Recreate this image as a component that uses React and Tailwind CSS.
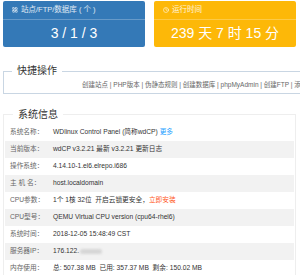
import { Clock, LayoutGrid } from 'lucide-react'

const ROWS = [
  { k: '系统名称：', v: <>WDlinux Control Panel (简称wdCP) <span className="text-[#1e9fff]">更多</span></> },
  { k: '当前版本：', v: 'wdCP v3.2.21 最新 v3.2.21 更新日志' },
  { k: '操作系统：', v: '4.14.10-1.el6.elrepo.i686' },
  { k: '主 机 名：', v: 'host.localdomain' },
  { k: 'CPU参数：', v: <>1个 1核 32位&nbsp;&nbsp;开启云锁更安全，<span className="text-[#ff5722]">立即安装</span></> },
  { k: 'CPU型号：', v: 'QEMU Virtual CPU version (cpu64-rhel6)' },
  { k: '系统时间：', v: '2018-12-05 15:48:49 CST' },
  { k: '服务器IP：', v: <span className="flex items-center">176.122.<span className="ml-[1px] inline-block h-[5px] w-[22px] rounded-full bg-[#d6d6d6] blur-[1px]" /></span> },
  { k: '内存使用：', v: '总: 507.38 MB  已用: 357.37 MB  剩余: 150.02 MB' },
]

const LINKS = ['创建站点', 'PHP版本', '伪静态规则', '创建数据库', 'phpMyAdmin', '创建FTP', '添加域名']

function Card({ color, icon, title, value }) {
  return (
    <div className={`h-[46px] w-[142px] rounded-[2px] text-white ${color}`}>
      <div className="flex h-[19px] items-center gap-[3px] border-b border-white/25 pl-[9px] text-[7.5px] text-white/85">
        {icon}{title}
      </div>
      <div className="flex h-[27px] items-center justify-center text-[14px] whitespace-pre">{value}</div>
    </div>
  )
}

export default function App() {
  return (
    <div className="h-[275px] w-[300px] overflow-hidden bg-white font-['Liberation_Sans','Noto_Sans_CJK_SC',sans-serif] text-[#333]">
      <div className="flex gap-[9px] pl-[3px] pt-[1px]">
        <Card color="bg-[#3479b7]" icon={<LayoutGrid size={6} strokeWidth={2.5} />} title="站点/FTP/数据库 ( 个 )" value="3 / 1 / 3" />
        <Card color="bg-[#fdb808]" icon={<Clock size={6} strokeWidth={2.5} />} title="运行时间" value="239 天 7 时 15 分" />
      </div>

      <fieldset className="ml-[3px] mt-[18px] w-[330px] border border-[#c9d6e3] pb-[3px]">
        <legend className="ml-[8px] px-[5px] text-[10px] leading-[12px] text-[#333]">快捷操作</legend>
        <div className="whitespace-nowrap pl-[78px] pt-[3px] text-[6.5px] text-[#666]">
          {LINKS.join(' | ')}
        </div>
      </fieldset>

      <fieldset className="ml-[3px] mt-[15px] w-[293px] border border-[#eeeeee] px-[1px] pt-[3px]">
        <legend className="ml-[8px] px-[5px] text-[10px] leading-[12px] text-[#333]">系统信息</legend>
        <div className="text-[6.7px]">
          {ROWS.map((r, i) => (
            <div key={r.k} className={`flex h-[17px] items-center ${i % 2 ? 'bg-[#f2f2f2]' : ''}`}>
              <div className="w-[48px] shrink-0 pl-[5px] text-[#666]">{r.k}</div>
              <div className="whitespace-pre">{r.v}</div>
            </div>
          ))}
        </div>
      </fieldset>
    </div>
  )
}
